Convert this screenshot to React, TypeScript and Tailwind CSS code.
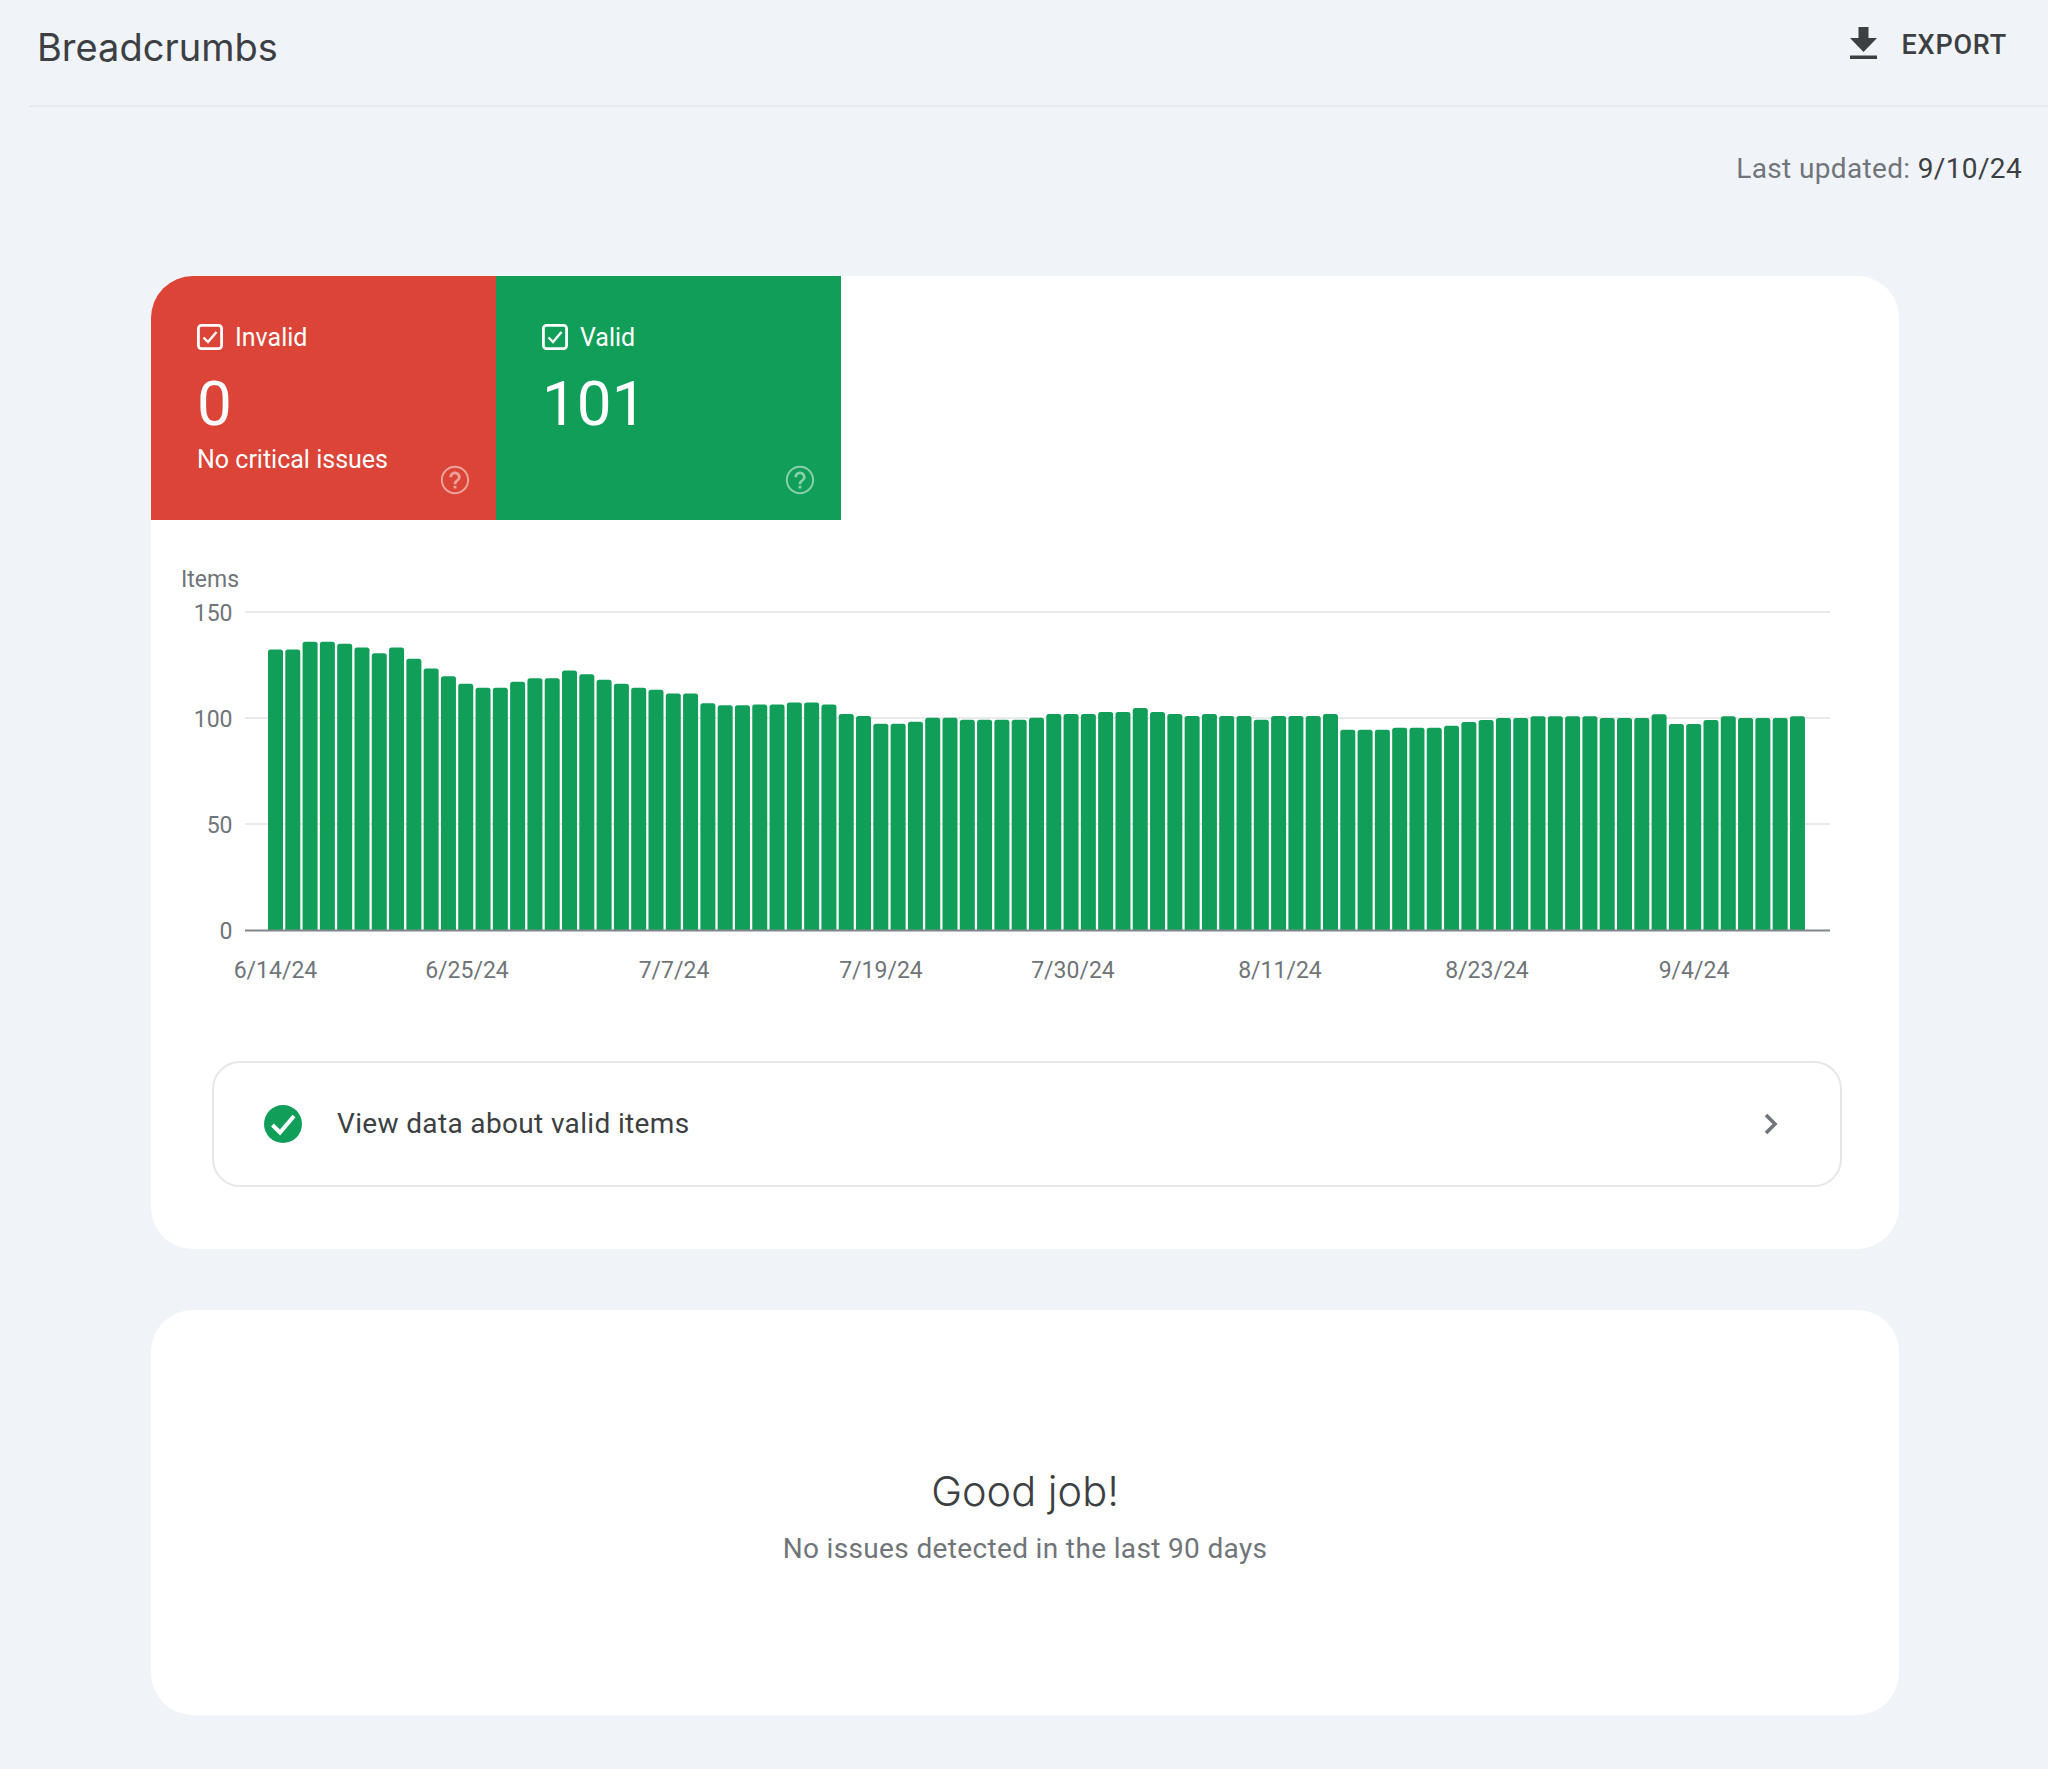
const barHeights = [
  281, 281, 288.7, 288.7, 286.7, 283, 277.3, 283, 271.7, 262, 254.3, 246.7, 242.7, 242.7, 248.7, 252.3, 252.3, 260, 256.3,
  250.7, 246.7, 242.7, 240.7, 237, 237, 227.3, 225.3, 225.3, 226, 226, 228, 228, 226, 216.5, 214.5, 206.8, 206.8, 208.8,
  212.8, 212.8, 210.8, 210.8, 210.8, 210.8, 212.8, 216.5, 216.5, 216.5, 218.5, 218.5, 222.5, 218.5, 216.5, 214.5, 216.5,
  214.5, 214.5, 210.8, 214.5, 214.5, 214.5, 216.5, 200.8, 200.8, 200.8, 202.8, 202.8, 202.8, 204.8, 208.5, 210.5, 212.5,
  212.5, 214.2, 214.2, 214.2, 214.2, 212.5, 212.5, 212.5, 216.2, 206.5, 206.5, 210.5, 214.2, 212.5, 212.5, 212.5, 214.2,
];

const BASE_Y = 410.5;
const yTicks = [
  { label: '150', y: 92 },
  { label: '100', y: 198 },
  { label: '50', y: 304 },
  { label: '0', y: BASE_Y },
];
const xTicks = [
  { label: '6/14/24', x: 124.5 },
  { label: '6/25/24', x: 316 },
  { label: '7/7/24', x: 523 },
  { label: '7/19/24', x: 730 },
  { label: '7/30/24', x: 922 },
  { label: '8/11/24', x: 1129 },
  { label: '8/23/24', x: 1336 },
  { label: '9/4/24', x: 1543 },
];

function barPath(x: number, h: number) {
  const w = 15;
  const r = 2.5;
  const top = BASE_Y - h;
  return `M${x} ${BASE_Y}V${top + r}Q${x} ${top} ${x + r} ${top}H${x + w - r}Q${x + w} ${top} ${x + w} ${top + r}V${BASE_Y}Z`;
}

function HelpIcon() {
  return (
    <svg viewBox="0 0 24 24" className="w-[34px] h-[34px] fill-white/50">
      <path d="M11 18h2v-2h-2v2zm1-16C6.48 2 2 6.48 2 12s4.48 10 10 10 10-4.48 10-10S17.52 2 12 2zm0 18.6c-4.74 0-8.6-3.86-8.6-8.6S7.26 3.4 12 3.4s8.6 3.86 8.6 8.6-3.86 8.6-8.6 8.6zM12 6c-2.21 0-4 1.79-4 4h2c0-1.1.9-2 2-2s2 .9 2 2c0 2-3 1.75-3 5h2c0-2.25 3-2.5 3-5 0-2.21-1.79-4-4-4z" />
    </svg>
  );
}

function CheckBox() {
  return (
    <svg viewBox="0 0 26 26" fill="none" className="w-[26px] h-[26px] stroke-white">
      <rect x="1.4" y="1.4" width="23.2" height="23.2" rx="3" strokeWidth="2.8" />
      <path d="M6.5 13.5l4.5 4.5 8.5-10" strokeWidth="2.4" />
    </svg>
  );
}

function Tile({ label, value, note, color }: { label: string; value: string; note?: string; color: string }) {
  return (
    <div className={`relative w-[345px] h-[244px] pl-[46px] pt-[48px] text-white ${color}`}>
      <div className="flex items-center gap-[12px] h-[26px]">
        <CheckBox />
        <span className="text-[25px] leading-none">{label}</span>
      </div>
      <p className="text-[62px] leading-none mt-[23px]">{value}</p>
      {note && <p className="text-[25px] leading-none mt-[12px]">{note}</p>}
      <div className="absolute left-[287px] top-[187px]">
        <HelpIcon />
      </div>
    </div>
  );
}

function Chart() {
  return (
    <svg viewBox="0 0 1748 541" className="block w-[1748px] h-[541px]">
      {yTicks.slice(0, 3).map((t) => (
        <line key={t.label} x1="94" x2="1679" y1={t.y} y2={t.y} stroke="#e8eaed" strokeWidth="2" />
      ))}
      {barHeights.map((h, i) => (
        <path key={i} d={barPath(117 + i * 17.295, h)} fill="#119e59" />
      ))}
      <line x1="94" x2="1679" y1={BASE_Y} y2={BASE_Y} stroke="#80868b" strokeWidth="2" />
      <text x="30" y="67" className="fill-[#70757a] text-[23px]">Items</text>
      {yTicks.map((t) => (
        <text key={t.label} x="81.5" y={t.y + 8.5} textAnchor="end" className="fill-[#70757a] text-[23px]">
          {t.label}
        </text>
      ))}
      {xTicks.map((t) => (
        <text key={t.label} x={t.x} y="457.5" textAnchor="middle" className="fill-[#70757a] text-[23px]">
          {t.label}
        </text>
      ))}
    </svg>
  );
}

export default function App() {
  return (
    <div className="min-h-[1769px] bg-[#f0f4f9] font-[Roboto,sans-serif] overflow-hidden">
      {/* Header */}
      <header className="ml-[30px] h-[107px] border-b-2 border-[#e6e9ed] flex items-center justify-between">
        <h1 className="text-[38px] leading-none text-[#3c4043] ml-[7px] mb-[11px] font-[Inter,sans-serif]">Breadcrumbs</h1>
        <button className="flex items-center gap-[25px] mr-[41px] mb-[19px] text-[#3c4043]">
          <svg viewBox="0 0 27 32" className="w-[27px] h-[32px] fill-[#3c4043]">
            <path d="M8.5 0h10v11H27L13.5 25 0 11h8.5zM0 28.5h27V32H0z" />
          </svg>
          <span className="text-[27px] leading-none font-medium tracking-[0.8px] mt-[5px]">EXPORT</span>
        </button>
      </header>

      <p className="text-right text-[28px] leading-none tracking-[0.35px] text-[#70757a] pr-[26px] mt-[48px]">
        Last updated: <span className="text-[#3c4043]">9/10/24</span>
      </p>

      <main className="ml-[151px] w-[1748px] mt-[93px]">
        {/* Status card */}
        <section className="bg-white rounded-[42px] overflow-hidden h-[973px]">
          <div className="flex">
            <Tile label="Invalid" value="0" note="No critical issues" color="bg-[#db4437]" />
            <Tile label="Valid" value="101" color="bg-[#119e59]" />
          </div>
          <Chart />
          <div className="ml-[61px] mr-[57px] h-[126px] border-2 border-[#e6e6e6] rounded-[28px] flex items-center pl-[50px] pr-[62px]">
            <svg viewBox="0 0 38 38" className="w-[38px] h-[38px] shrink-0">
              <circle cx="19" cy="19" r="19" fill="#119e59" />
              <path d="M8.5 20l7.5 7.5L30 11" fill="none" stroke="#fff" strokeWidth="4" />
            </svg>
            <span className="ml-[35px] text-[28px] leading-none tracking-[0.35px] text-[#3c4043] flex-1">View data about valid items</span>
            <svg viewBox="0 0 14 22" fill="none" className="w-[14px] h-[22px] stroke-[#70757a]">
              <path d="M2 2l9 9-9 9" strokeWidth="3.6" />
            </svg>
          </div>
        </section>

        {/* Issues card */}
        <section className="mt-[61px] bg-white rounded-[42px] h-[405px] flex flex-col items-center pt-[161px]">
          <h2 className="text-[41.5px] leading-none text-[#3c4043] font-light font-[Inter,sans-serif]">Good job!</h2>
          <p className="text-[28px] leading-none tracking-[0.35px] text-[#70757a] mt-[22px]">No issues detected in the last 90 days</p>
        </section>
      </main>
    </div>
  );
}
